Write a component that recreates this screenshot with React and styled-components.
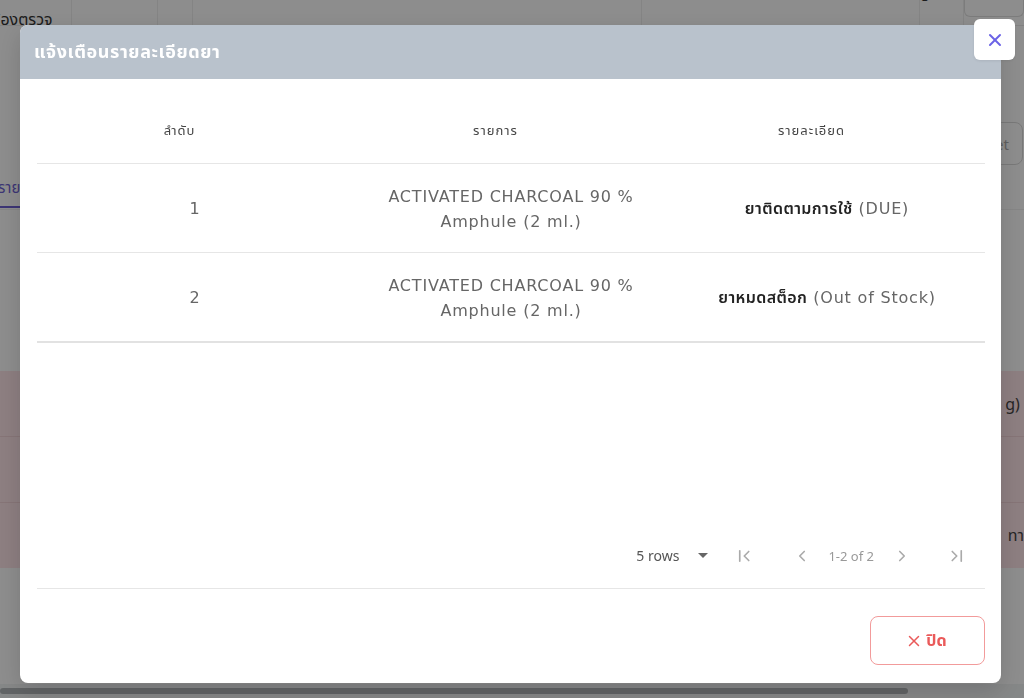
import React from 'react';
import styled, { createGlobalStyle } from 'styled-components';

const GlobalStyle = createGlobalStyle`
  html, body {
    margin: 0;
    padding: 0;
    width: 1024px;
    height: 698px;
    overflow: hidden;
    background: #fbfbfb;
    font-family: "Noto Sans", "Noto Sans Thai", "DejaVu Sans", sans-serif;
  }
`;

const font = `"Noto Sans", "Noto Sans Thai", "DejaVu Sans", sans-serif`;
const wideFont = `"DejaVu Sans", "Noto Sans Thai", "Noto Sans", sans-serif`;

/* ---------- page behind the dialog ---------- */

const Page = styled.div`
  width: 1024px;
  height: 698px;
  display: flex;
  flex-direction: column;
  background: #fbfbfb;
  color: #222;
  font-family: ${font};
`;

const TopRow = styled.div`
  display: grid;
  grid-template-columns: 72px 86px 35px 449px 278px 44px 60px;
  height: 25px;
  overflow: hidden;
  border-bottom: 1px solid #e6e6e6;
`;

const TopCell = styled.div`
  border-right: 1px solid #ececec;
  font-size: 16px;
  padding-top: ${(p) => (p.$up ? 0 : 8)}px;
  margin-top: ${(p) => (p.$up ? -16 : 0)}px;
  white-space: nowrap;
  overflow: hidden;
  color: #333;
  margin-left: ${(p) => (p.$shift ? '-9px' : '0')};
  &:last-child {
    border: 1px solid #ddd;
    border-top: none;
    border-radius: 0 0 6px 6px;
    height: 16px;
    margin-top: 0;
    padding-top: 0;
  }
`;

const ToolRow = styled.div`
  display: flex;
  justify-content: flex-end;
  padding: 96px 1px 0 0;
  height: 44px;
`;

const GhostButton = styled.div`
  width: 80px;
  height: 43px;
  border: 1px solid #d8d8d8;
  border-radius: 8px;
  font-size: 15px;
  color: #aaa;
  display: flex;
  align-items: center;
  justify-content: flex-end;
  padding-right: 13px;
  box-sizing: border-box;
`;

const Tabs = styled.div`
  display: flex;
  height: 43px;
  border-bottom: 1px solid #eee;
`;

const Tab = styled.div`
  margin-left: -2px;
  padding: 11px 0 0;
  width: 60px;
  color: #6c5fd0;
  font-size: 15px;
  border-bottom: 2px solid #6c5fd0;
  height: 29px;
  white-space: nowrap;
`;

const Gap = styled.div`
  height: ${(p) => p.$h}px;
`;

const PinkBand = styled.div`
  display: flex;
  flex-direction: column;
  background: #fbe2e6;
`;

const PinkRow = styled.div`
  height: 65px;
  border-bottom: 1px solid #efd0d4;
  display: flex;
  justify-content: flex-end;
  align-items: center;
  font-size: 16px;
  color: #444;
  &:last-child {
    border-bottom: none;
  }
`;

const ScrollTrack = styled.div`
  margin-top: auto;
  height: 14px;
  background: #eef0f1;
  display: flex;
  align-items: center;
`;

const ScrollThumb = styled.div`
  width: 908px;
  height: 6px;
  border-radius: 3px;
  background: #aeb2b5;
`;

/* ---------- dialog ---------- */

const Overlay = styled.div`
  position: fixed;
  inset: 0;
  background: rgba(0, 0, 0, 0.44);
`;

const Dialog = styled.div`
  position: fixed;
  left: 20px;
  top: 25px;
  width: 981px;
  height: 658px;
  background: #fff;
  border-radius: 8px;
  display: flex;
  flex-direction: column;
  font-family: ${font};
  box-shadow: 0 8px 24px rgba(0, 0, 0, 0.15);
`;

const Header = styled.div`
  height: 54px;
  flex-shrink: 0;
  background: #b9c2cc;
  border-radius: 8px 8px 0 0;
  display: flex;
  align-items: center;
  padding-left: 14px;
  color: #fff;
  font-size: 18px;
  letter-spacing: 0.6px;
  font-weight: 700;
`;

const CloseButton = styled.button`
  position: absolute;
  top: -6px;
  right: -14px;
  width: 41px;
  height: 41px;
  border: none;
  border-radius: 6px;
  background: #fff;
  display: flex;
  align-items: center;
  justify-content: center;
  padding: 0;
  cursor: pointer;
  box-shadow: 0 1px 3px rgba(0, 0, 0, 0.08);
`;

const Body = styled.div`
  flex: 1;
  display: flex;
  flex-direction: column;
  padding: 21px 16px 0 17px;
`;

const Row = styled.div`
  display: grid;
  grid-template-columns: 1fr 1fr 1fr;
  height: ${(p) => (p.$head ? 64 : p.$last ? 90 : 89)}px;
  border-bottom: ${(p) => (p.$last ? '2px solid #e2e2e2' : '1px solid #e6e6e6')};
  box-sizing: border-box;
`;

const HeadCell = styled.div`
  display: flex;
  align-items: center;
  justify-content: center;
  font-size: 13px;
  letter-spacing: 1px;
  color: #444;
  padding-bottom: 2px;
`;

const SortSpace = styled.span`
  display: inline-block;
  width: 31px;
`;

const Cell = styled.div`
  display: flex;
  flex-direction: column;
  align-items: center;
  justify-content: center;
  text-align: center;
  font-family: ${wideFont};
  font-size: 16px;
  line-height: 25px;
  color: #666;
  letter-spacing: 0.8px;
  padding-top: 1px;
`;

const Strong = styled.span`
  color: #222;
  font-family: ${font};
  font-size: 16px;
  font-weight: 600;
  letter-spacing: 0.4px;
`;

const Filler = styled.div`
  flex: 1;
`;

const Pagination = styled.div`
  height: 66px;
  border-bottom: 1px solid #e6e6e6;
  display: flex;
  align-items: center;
  justify-content: flex-end;
  box-sizing: border-box;
  padding-right: 17px;
`;

const RowsSelect = styled.div`
  display: flex;
  align-items: center;
  font-size: 14px;
  color: #555;
  margin-right: 25px;
  gap: 19px;
`;

const PageButton = styled.div`
  width: 24px;
  height: 24px;
  display: flex;
  align-items: center;
  justify-content: center;
  margin-left: ${(p) => p.$ml || 0}px;
`;

const PageInfo = styled.div`
  font-size: 13px;
  color: #999;
  margin: 0 16px 0 14px;
`;

const Footer = styled.div`
  height: 94px;
  display: flex;
  justify-content: flex-end;
  align-items: flex-start;
  padding: 27px 16px 0 0;
  box-sizing: border-box;
`;

const DangerButton = styled.button`
  width: 115px;
  height: 49px;
  border: 1px solid #f29b9b;
  border-radius: 8px;
  background: #fff;
  color: #ea5a5a;
  font-family: ${font};
  font-size: 16px;
  font-weight: 700;
  display: flex;
  align-items: center;
  justify-content: center;
  gap: 6px;
  cursor: pointer;
`;

const Chevron = ({ dir = 'left', bar = false }) => (
  <svg width="18" height="18" viewBox="0 0 24 24" fill="none" stroke="#aaa" strokeWidth="2.2" strokeLinecap="round" strokeLinejoin="round">
    {dir === 'left' ? (
      <>
        {bar && <line x1="5" y1="5" x2="5" y2="19" />}
        <polyline points={bar ? '17 6 11 12 17 18' : '15 6 9 12 15 18'} />
      </>
    ) : (
      <>
        <polyline points={bar ? '7 6 13 12 7 18' : '9 6 15 12 9 18'} />
        {bar && <line x1="19" y1="5" x2="19" y2="19" />}
      </>
    )}
  </svg>
);

const items = [
  { no: 1, name: 'ACTIVATED CHARCOAL 90 %', unit: 'Amphule (2 ml.)', th: 'ยาติดตามการใช้', en: '(DUE)' },
  { no: 2, name: 'ACTIVATED CHARCOAL 90 %', unit: 'Amphule (2 ml.)', th: 'ยาหมดสต็อก', en: '(Out of Stock)' },
];

const App = () => (
  <>
    <GlobalStyle />
    <Page>
      <TopRow>
        <TopCell $shift>ห้องตรวจ</TopCell>
        <TopCell />
        <TopCell />
        <TopCell />
        <TopCell />
        <TopCell $up>ปี</TopCell>
        <TopCell />
      </TopRow>
      <ToolRow>
        <GhostButton>Reset</GhostButton>
      </ToolRow>
      <Tabs>
        <Tab>รายการ</Tab>
      </Tabs>
      <Gap $h={161} />
      <PinkBand>
        <PinkRow>g)&nbsp;</PinkRow>
        <PinkRow />
        <PinkRow>ทา</PinkRow>
      </PinkBand>
      <ScrollTrack>
        <ScrollThumb />
      </ScrollTrack>
    </Page>

    <Overlay />
    <Dialog>
      <Header>แจ้งเตือนรายละเอียดยา</Header>
      <CloseButton aria-label="close">
        <svg width="14" height="14" viewBox="0 0 14 14" stroke="#6b63e6" strokeWidth="2" strokeLinecap="round">
          <line x1="2" y1="2" x2="12" y2="12" />
          <line x1="12" y1="2" x2="2" y2="12" />
        </svg>
      </CloseButton>

      <Body>
        <Row $head>
          <HeadCell>ลำดับ<SortSpace /></HeadCell>
          <HeadCell>รายการ<SortSpace /></HeadCell>
          <HeadCell>รายละเอียด<SortSpace /></HeadCell>
        </Row>
        {items.map((it, i) => (
          <Row key={it.no} $last={i === items.length - 1}>
            <Cell>{it.no}</Cell>
            <Cell>
              <span>{it.name}</span>
              <span>{it.unit}</span>
            </Cell>
            <Cell>
              <span>
                <Strong>{it.th}</Strong> {it.en}
              </span>
            </Cell>
          </Row>
        ))}
        <Filler />
        <Pagination>
          <RowsSelect>
            5 rows
            <svg width="10" height="6" viewBox="0 0 10 6">
              <polygon points="0,0 10,0 5,5" fill="#666" />
            </svg>
          </RowsSelect>
          <PageButton><Chevron dir="left" bar /></PageButton>
          <PageButton $ml={33}><Chevron dir="left" /></PageButton>
          <PageInfo>1-2 of 2</PageInfo>
          <PageButton><Chevron dir="right" /></PageButton>
          <PageButton $ml={30}><Chevron dir="right" bar /></PageButton>
        </Pagination>
      </Body>

      <Footer>
        <DangerButton>
          <svg width="12" height="12" viewBox="0 0 12 12" stroke="#ea5a5a" strokeWidth="1.5" strokeLinecap="round">
            <line x1="1.5" y1="1.5" x2="10.5" y2="10.5" />
            <line x1="10.5" y1="1.5" x2="1.5" y2="10.5" />
          </svg>
          ปิด
        </DangerButton>
      </Footer>
    </Dialog>
  </>
);

export default App;
